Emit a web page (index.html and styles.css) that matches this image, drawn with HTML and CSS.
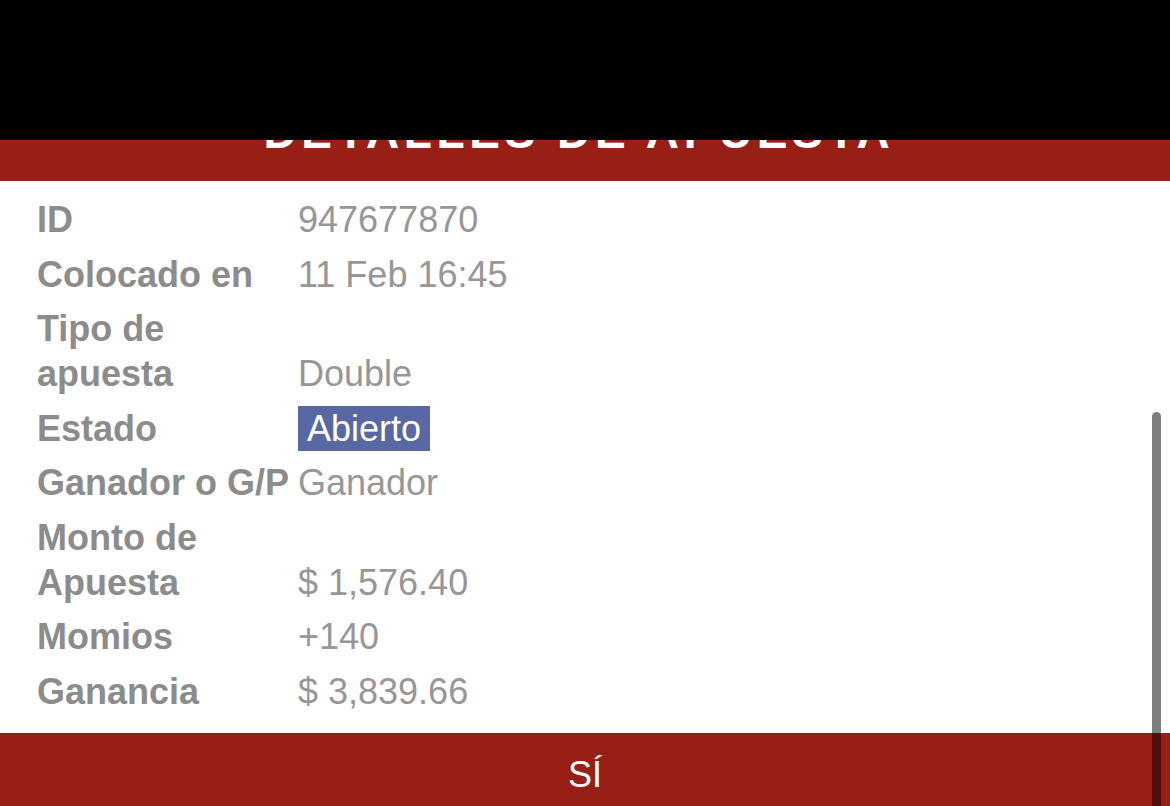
FILE: index.html
```html
<!DOCTYPE html>
<html lang="es">

<head>
  <meta charset="UTF-8">
  <meta name="viewport" content="width=device-width, initial-scale=1.0">
  <title>Detalles de apuesta</title>
  <link rel="stylesheet" href="styles.css">
</head>

<body>
  <div class="top-bar"></div>
  <div class="modal">
    <div class="modal-header">
      <h2>DETALLES DE APUESTA</h2>
    </div>
    <div class="modal-body">
      <div class="detail">
        <span class="label">ID</span>
        <span class="value">947677870</span>
      </div>
      <div class="detail">
        <span class="label">Colocado en</span>
        <span class="value">11 Feb 16:45</span>
      </div>
      <div class="detail">
        <span class="label">Tipo de apuesta</span>
        <span class="value">Double</span>
      </div>
      <div class="detail">
        <span class="label">Estado</span>
        <span class="value"><span class="status">Abierto</span></span>
      </div>
      <div class="detail">
        <span class="label">Ganador o G/P</span>
        <span class="value">Ganador</span>
      </div>
      <div class="detail">
        <span class="label">Monto de Apuesta</span>
        <span class="value">$ 1,576.40</span>
      </div>
      <div class="detail">
        <span class="label">Momios</span>
        <span class="value">+140</span>
      </div>
      <div class="detail">
        <span class="label">Ganancia</span>
        <span class="value">$ 3,839.66</span>
      </div>
    </div>
    <button class="confirm">SÍ</button>
  </div>
  <div class="scrollbar"></div>
</body>

</html>
```

FILE: styles.css
```css
* {
  margin: 0;
  padding: 0;
  box-sizing: border-box;
}

body {
  height: 100vh;
  overflow: hidden;
  background-color: white;
  font-family: "Liberation Sans", Arial, sans-serif;
}

.top-bar {
  position: absolute;
  top: 0;
  left: 0;
  width: 100%;
  height: 140px;
  background-color: black;
  z-index: 2;
}

.modal {
  display: flex;
  flex-direction: column;
}

.modal-header {
  display: flex;
  justify-content: center;
  align-items: flex-end;
  height: 181px;
  padding-bottom: 23px;
  padding-right: 12px;
  background-color: #981f16;
}

.modal-header h2 {
  color: white;
  font-size: 46px;
  line-height: 52px;
  font-weight: bold;
  letter-spacing: 4.6px;
}

.modal-body {
  display: flex;
  flex-direction: column;
  gap: 9.5px;
  padding: 16px 0 19px 37px;
  font-size: 36px;
  line-height: 45px;
}

.detail {
  display: grid;
  grid-template-columns: 261px 1fr;
}

.detail .label {
  color: #8c8c8c;
  font-weight: bold;
}

.detail .value {
  align-self: end;
  color: #979797;
}

.status {
  display: inline-block;
  padding: 0 9px;
  background-color: #5868a4;
  color: white;
}

.confirm {
  display: flex;
  justify-content: center;
  align-items: flex-start;
  height: 90px;
  padding-top: 19px;
  border: none;
  background-color: #981f16;
  color: white;
  font-family: inherit;
  font-size: 36px;
  line-height: 45px;
}

.scrollbar {
  position: absolute;
  top: 412px;
  left: 1152px;
  width: 9px;
  height: 420px;
  border-radius: 5px;
  background-color: rgba(0, 0, 0, 0.5);
}
```
